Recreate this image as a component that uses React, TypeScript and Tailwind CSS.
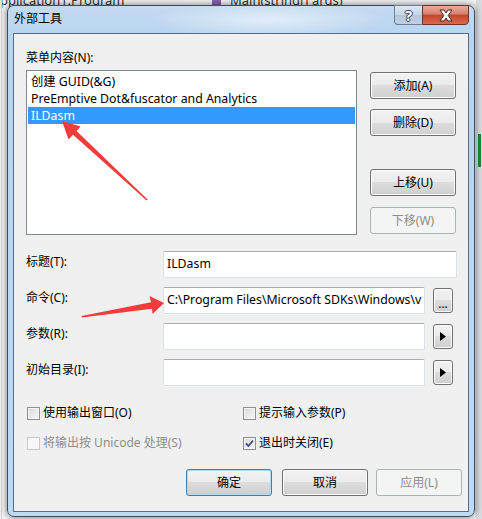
import React from 'react';

const font = "font-['Noto_Sans','Noto_Sans_CJK_SC',sans-serif]";

const btn =
  'flex items-center justify-center rounded-[3px] border border-[#707070] bg-[linear-gradient(#f2f2f2_0%,#ebebeb_50%,#dddddd_50%,#cfcfcf_100%)] shadow-[inset_0_0_0_1px_#fcfcfc] text-[12px] text-black';
const btnOff =
  'flex items-center justify-center rounded-[3px] border border-[#adb2b5] bg-[#f4f4f4] text-[12px] text-[#8d8d8d]';
const input =
  'h-[27px] border border-[#dde1e8] border-t-[#abadb3] rounded-[2px] bg-white pl-[3px] flex items-center overflow-hidden whitespace-nowrap text-[12.3px] text-black';

const Arrow = () => (
  <svg className="absolute left-0 top-0 pointer-events-none" width="482" height="519" viewBox="0 0 482 519">
    <polygon
      fill="#f23c3c"
      points="62,121 80.5,126.5 76.6,131 147.6,199.6 146.6,200.4 73,134.8 68.5,139.5"
    />
    <polygon
      fill="#f23c3c"
      points="164,303 149.5,296 151,302.3 81.5,316 82,317.6 152,308.8 152.5,314"
    />
  </svg>
);

const Check = ({ label, checked, disabled }: { label: string; checked?: boolean; disabled?: boolean }) => (
  <div className="flex items-center h-[16px]">
    <div
      className={
        'w-[13px] h-[13px] border flex items-center justify-center ' +
        (disabled
          ? 'border-[#c9c9c9] bg-[#f7f7f7]'
          : 'border-[#8e8f8f] bg-[linear-gradient(135deg,#dcdcdc,#f7f7f7)] shadow-[inset_0_0_0_1px_#f4f4f4]')
      }
    >
      {checked && (
        <svg width="9" height="9" viewBox="0 0 9 9">
          <path d="M1 4.5 L3.5 7 L8 1.5" fill="none" stroke="#3c4f8c" strokeWidth="1.8" />
        </svg>
      )}
    </div>
    <span className={'ml-[3px] text-[12px] ' + (disabled ? 'text-[#8d8d8d]' : 'text-black')}>{label}</span>
  </div>
);

const Play = () => (
  <svg width="6" height="9" viewBox="0 0 6 9">
    <polygon points="0,0 6,4.5 0,9" fill="#000" />
  </svg>
);

export default function App() {
  return (
    <div className={'relative w-[482px] h-[519px] overflow-hidden bg-[#f3f3f3] ' + font}>
      {/* editor behind the dialog */}
      <div className="absolute left-0 top-[-9px] text-[13px] text-[#333] whitespace-nowrap">pplication1.Program</div>
      <div className="absolute left-[212px] top-[-4px] w-[9px] h-[9px] bg-[#8a5fb0]" />
      <div className="absolute left-[230px] top-[-9px] text-[13px] text-[#333] whitespace-nowrap">Main(string[] args)</div>
      <div className="absolute left-[1px] top-0 w-px h-[519px] bg-[#cfd3d8]" />
      <div className="absolute right-0 top-0 w-[6px] h-[519px] bg-[#d8dbe0]" />
      <div className="absolute right-[1px] top-[134px] w-[3px] h-[33px] bg-[#1f8a3a]" />

      {/* window */}
      <div className="absolute left-[7px] top-[5px] w-[468px] h-[512px] rounded-[7px] border border-[#3f4c5b] bg-[linear-gradient(180deg,#c3daf0_0px,#b8d5f0_30px,#bcdaf5_100%)] shadow-[0_0_7px_rgba(0,0,0,0.55)] flex flex-col">
        <div className="h-[27px] pl-[6px] pt-[5px] text-[12px] leading-[16px] text-black bg-[radial-gradient(ellipse_120px_18px_at_260px_14px,rgba(255,255,255,0.55),transparent)]">
          外部工具
        </div>
        <div className="absolute top-[-1px] right-[5px] flex h-[20px]">
          <div className="w-[28px] rounded-bl-[4px] border border-[#6d7e92] border-r-0 bg-[linear-gradient(#dde8f3,#c5d5e6_50%,#b3c6da_50%,#bfd1e4)] flex items-center justify-center">
            <span className="text-white text-[15px] font-bold leading-none [text-shadow:1px_0_#334155,-1px_0_#334155,0_1px_#334155,0_-1px_#334155]">?</span>
          </div>
          <div className="w-[47px] rounded-br-[4px] border border-[#6b3529] bg-[linear-gradient(#e9a99b,#d9806d_45%,#c4442c_50%,#d86a4f)] flex items-center justify-center">
            <svg width="16" height="13" viewBox="0 0 16 13">
              <path
                d="M2 1 L6 1 L8 4 L10 1 L14 1 L10.2 6.5 L14 12 L10 12 L8 9 L6 12 L2 12 L5.8 6.5 Z"
                fill="#fff"
                stroke="#3d2620"
                strokeWidth="1"
              />
            </svg>
          </div>
        </div>

        {/* client area */}
        <div className="mx-[5px] mb-[4px] flex-1 border border-[#5b6c80] bg-[#f0f0f0] pl-[12px] pt-[16px] flex flex-col">
          <div className="text-[12px] leading-[16px] text-black">菜单内容(N):</div>
          <div className="mt-[4px] flex">
            <div className="w-[331px] h-[165px] border border-[#828790] bg-white p-px pt-[2px]">
              <div className="h-[17px] pl-[3px] text-[12.3px] leading-[17px] text-black whitespace-nowrap">创建 GUID(&amp;G)</div>
              <div className="h-[17px] pl-[3px] text-[12.3px] leading-[17px] text-black whitespace-nowrap">PreEmptive Dot&amp;fuscator and Analytics</div>
              <div className="h-[17px] pl-[3px] text-[12.3px] leading-[17px] text-white bg-[#3399ff] whitespace-nowrap">ILDasm</div>
            </div>
            <div className="ml-[13px] flex flex-col pt-[2px]">
              <div className={btn + ' w-[86px] h-[27px]'}>添加(A)</div>
              <div className={btn + ' w-[86px] h-[27px] mt-[10px]'}>删除(D)</div>
              <div className={btn + ' w-[86px] h-[27px] mt-[33px]'}>上移(U)</div>
              <div className={btnOff + ' w-[86px] h-[27px] mt-[11px]'}>下移(W)</div>
            </div>
          </div>

          <div className="mt-[16px] flex flex-col gap-[9px]">
            <div className="flex">
              <div className="w-[137px] text-[12px] leading-[16px] pt-[3px]">标题(T):</div>
              <div className={input + ' w-[294px]'}>ILDasm</div>
            </div>
            <div className="flex">
              <div className="w-[137px] text-[12px] leading-[16px] pt-[3px]">命令(C):</div>
              <div className={input + ' w-[262px]'}>C:\Program Files\Microsoft SDKs\Windows\v</div>
              <div className={btn + ' ml-[8px] mt-px w-[20px] h-[25px] items-end pb-[2px] leading-none'}>...</div>
            </div>
            <div className="flex">
              <div className="w-[137px] text-[12px] leading-[16px] pt-[3px]">参数(R):</div>
              <div className={input + ' w-[262px]'} />
              <div className={btn + ' ml-[8px] mt-px w-[20px] h-[25px]'}>
                <Play />
              </div>
            </div>
            <div className="flex">
              <div className="w-[137px] text-[12px] leading-[16px] pt-[3px]">初始目录(I):</div>
              <div className={input + ' w-[262px]'} />
              <div className={btn + ' ml-[8px] mt-px w-[20px] h-[25px]'}>
                <Play />
              </div>
            </div>
          </div>

          <div className="mt-[19px] pl-px grid grid-cols-[216px_1fr] gap-y-[14px]">
            <Check label="使用输出窗口(O)" />
            <Check label="提示输入参数(P)" />
            <Check label="将输出按 Unicode 处理(S)" disabled />
            <Check label="退出时关闭(E)" checked />
          </div>

          <div className="mt-[18px] flex justify-end pr-[6px]">
            <div className="w-[86px] h-[27px] rounded-[3px] border border-[#3c7fb1] bg-[linear-gradient(#f2f2f2_0%,#ebebeb_50%,#dddddd_50%,#cfcfcf_100%)] shadow-[inset_0_0_0_1px_#a9dcf7] flex items-center justify-center text-[12px] text-black">
              确定
            </div>
            <div className={btn + ' w-[86px] h-[27px] ml-[10px]'}>取消</div>
            <div className={btnOff + ' w-[86px] h-[27px] ml-[8px]'}>应用(L)</div>
          </div>
        </div>
      </div>

      <Arrow />
    </div>
  );
}
